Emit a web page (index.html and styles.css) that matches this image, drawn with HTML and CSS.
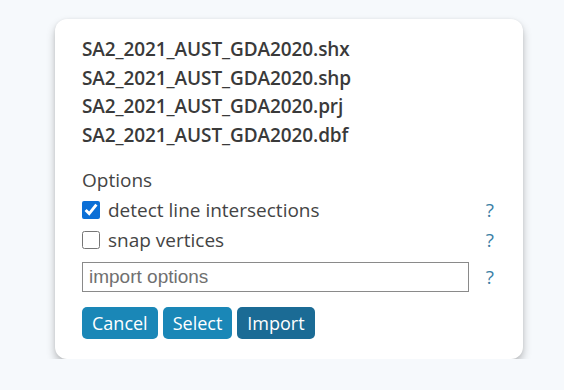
FILE: index.html
```html
<!DOCTYPE html>
<html>

<head>
  <title>Import</title>
  <link rel="stylesheet" href="styles.css">
</head>

<body>
  <div class="dialog">
    <div class="file-list">
      <div class="file">SA2_2021_AUST_GDA2020.shx</div>
      <div class="file">SA2_2021_AUST_GDA2020.shp</div>
      <div class="file">SA2_2021_AUST_GDA2020.prj</div>
      <div class="file">SA2_2021_AUST_GDA2020.dbf</div>
    </div>
    <div class="options">
      <div class="options-title">Options</div>
      <div class="option-row">
        <label class="check"><input type="checkbox" checked> detect line intersections</label>
        <span class="tip">?</span>
      </div>
      <div class="option-row">
        <label class="check"><input type="checkbox"> snap vertices</label>
        <span class="tip">?</span>
      </div>
      <div class="option-row">
        <input class="text-input" type="text" placeholder="import options">
        <span class="tip">?</span>
      </div>
    </div>
    <div class="buttons">
      <button class="btn">Cancel</button>
      <button class="btn">Select</button>
      <button class="btn btn-primary">Import</button>
    </div>
  </div>
</body>

</html>
```

FILE: styles.css
```css
body {
  margin: 0;
  background-color: #f6f9fc;
  font-family: "Open Sans", "Noto Sans", sans-serif;
  color: #444;
}

.dialog {
  box-sizing: border-box;
  width: 468px;
  height: 340px;
  margin: 19px 0 0 55px;
  padding: 16px 28px 0 27px;
  background-color: #fff;
  border-radius: 12px;
  box-shadow: 0 5px 8px rgba(0, 0, 0, .25), 0 0 3px rgba(0, 0, 0, .06);
}

.file {
  font-size: 19px;
  font-weight: 600;
  line-height: 28.5px;
  color: #3a3a3a;
  letter-spacing: -.1px;
}

.options {
  margin-top: 16px;
}

.options-title {
  font-size: 19px;
  line-height: 30px;
}

.option-row {
  display: flex;
  align-items: center;
  justify-content: space-between;
  height: 30px;
  padding-right: 1px;
}

.option-row:last-child {
  margin-top: 7px;
}

.check {
  display: flex;
  align-items: center;
  font-size: 19px;
}

.check input {
  width: 18px;
  height: 18px;
  margin: 0 8px 0 0;
  accent-color: #0b6fd6;
}

.tip {
  font-size: 19px;
  color: #3b7fa6;
}

.text-input {
  box-sizing: border-box;
  width: 387px;
  height: 30px;
  padding: 0 6px;
  border: 1px solid #8a8a8a;
  font-family: "Liberation Sans", Arial, sans-serif;
  font-size: 19px;
  color: #333;
}

.text-input::placeholder {
  color: #707070;
}

.buttons {
  display: flex;
  gap: 5px;
  margin-top: 15px;
}

.btn {
  height: 32px;
  padding: 0 10px;
  border: 0;
  border-radius: 5px;
  background-color: #1a87b7;
  color: #fff;
  font-family: "Open Sans", "Noto Sans", sans-serif;
  font-size: 18px;
}

.btn-primary {
  background-color: #1b6b95;
}
```
